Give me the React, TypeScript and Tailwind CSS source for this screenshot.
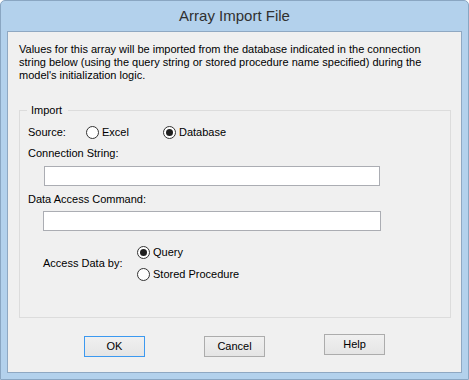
import React from "react";

const font = { fontFamily: '"Liberation Sans", Arial, sans-serif' };

function Radio({ checked }: { checked?: boolean }) {
  return (
    <span className="w-[13px] h-[13px] rounded-full border border-[#333333] bg-white flex items-center justify-center shrink-0 box-border">
      {checked && <span className="w-[7px] h-[7px] rounded-full bg-[#1f1f1f]" />}
    </span>
  );
}

function Btn({ label, primary, className }: { label: string; primary?: boolean; className?: string }) {
  return (
    <div
      className={
        "w-[61px] h-[21px] box-border border flex items-center justify-center text-[11px] text-black bg-gradient-to-b from-[#f0f0f0] to-[#e5e5e5] " +
        (primary ? "border-[#3c99f0] " : "border-[#acacac] ") +
        (className ?? "")
      }
    >
      {label}
    </div>
  );
}

export default function App() {
  return (
    <div className="w-[469px] h-[380px] bg-white" style={font}>
      <div className="w-[469px] h-[380px] box-border border border-[#8aa6c2] rounded-t-[5px] bg-[#b3d1ec] flex flex-col">
        <div className="h-[30px] flex items-center justify-center text-[15px] text-[#303030]">
          Array Import File
        </div>
        <div className="ml-[6px] w-[455px] h-[342px] box-border border border-[#8fa8c2] bg-[#f0f0f0] flex flex-col text-[11px] text-black">
          <div className="pl-[11px] pt-[11px] leading-[13px]">
            Values for this array will be imported from the database indicated in the connection
            <br />
            string below (using the query string or stored procedure name specified) during the
            <br />
            model's initialization logic.
          </div>

          <div className="relative ml-[11px] mt-[28px] w-[432px] h-[208px] box-border border border-[#dcdcdc] flex flex-col pl-[8px]">
            <span className="absolute top-[-7px] left-[7px] px-[4px] pr-[6px] leading-[13px] bg-[#f0f0f0]">
              Import
            </span>

            <div className="mt-[14px] h-[14px] flex items-center">
              <span className="w-[58px]">Source:</span>
              <div className="w-[77px] flex items-center">
                <Radio />
                <span className="ml-[3px]">Excel</span>
              </div>
              <div className="flex items-center">
                <Radio checked />
                <span className="ml-[3px]">Database</span>
              </div>
            </div>

            <div className="mt-[7px] h-[14px] leading-[14px]">Connection String:</div>
            <div className="mt-[6px] ml-[16px] w-[336px] h-[20px] box-border border border-[#abadb3] bg-white" />

            <div className="mt-[6px] h-[14px] leading-[14px]">Data Access Command:</div>
            <div className="mt-[5px] ml-[15px] w-[338px] h-[20px] box-border border border-[#abadb3] bg-white" />

            <div className="mt-[14px] ml-[15px] h-[36px] flex items-center">
              <span className="w-[94px]">Access Data by:</span>
              <div className="flex flex-col gap-[8px]">
                <div className="h-[14px] flex items-center">
                  <Radio checked />
                  <span className="ml-[3px]">Query</span>
                </div>
                <div className="h-[14px] flex items-center">
                  <Radio />
                  <span className="ml-[3px]">Stored Procedure</span>
                </div>
              </div>
            </div>
          </div>

          <div className="mt-[16px] flex items-start">
            <Btn label="OK" primary className="ml-[76px] mt-[2px]" />
            <Btn label="Cancel" className="ml-[59px] mt-[2px]" />
            <Btn label="Help" className="ml-[59px]" />
          </div>
        </div>
      </div>
    </div>
  );
}
